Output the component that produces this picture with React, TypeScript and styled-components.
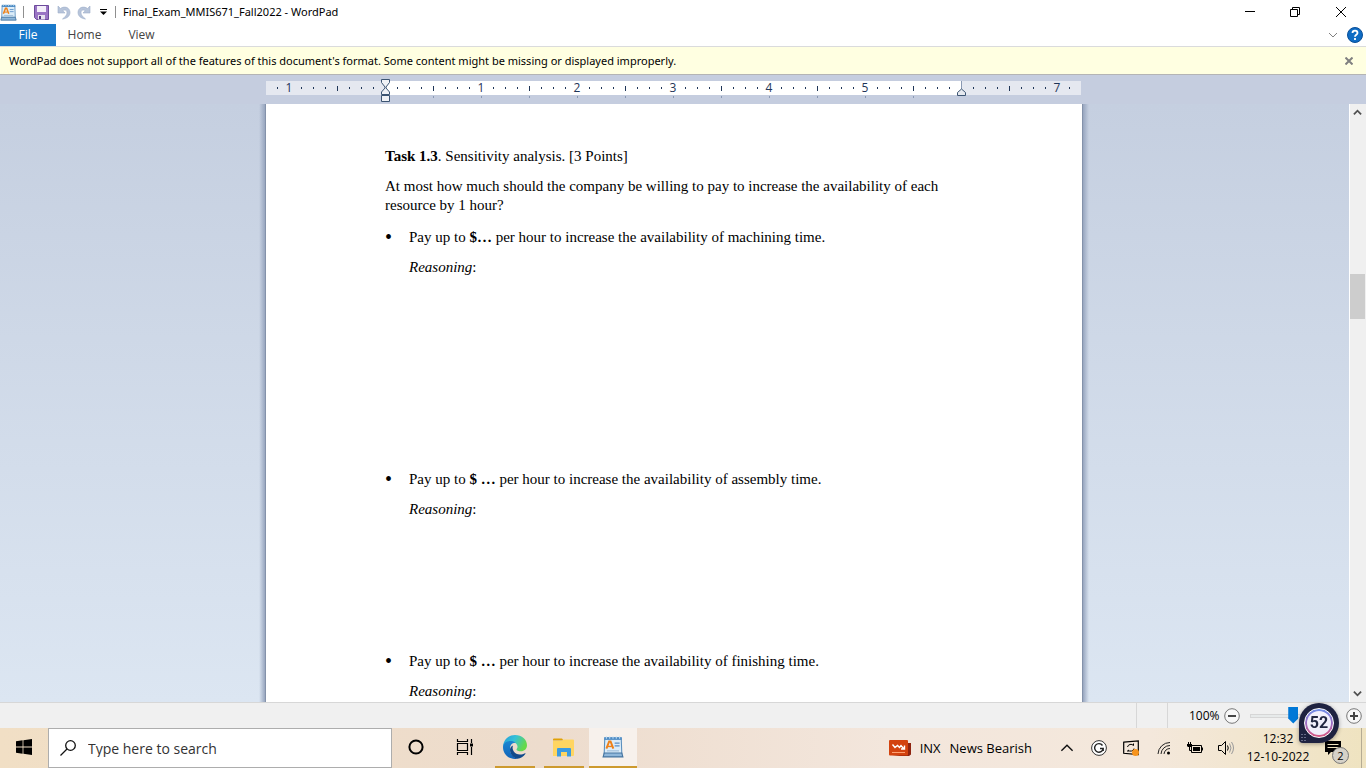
import React from 'react';
import styled, { createGlobalStyle } from 'styled-components';

const Global = createGlobalStyle`
  *, *::before, *::after { box-sizing: border-box; }
  body { margin: 0; font-family: "Open Sans", "Noto Sans", sans-serif; font-size: 12px; line-height: 16px; color: #000; }
  button { border: 0; padding: 0; background: none; font: inherit; color: inherit; display: inline-flex; align-items: center; justify-content: center; }
  svg { display: block; flex: none; }
`;

const Desktop = styled.div`
  height: 100vh;
  min-height: 480px;
  display: flex;
  flex-direction: column;
  overflow: hidden;
  background: #fff;
`;

const TitleBar = styled.header`
  display: flex;
  align-items: center;
  height: 24px;
  padding-right: 1px;
`;

const QuickAccess = styled.div`
  display: flex;
  align-items: center;
`;

const IconButton = styled.button<{ $w: number; $h?: number }>`
  width: ${p => p.$w}px;
  height: ${p => p.$h ?? 24}px;
  flex: none;
`;

const Separator = styled.span`
  width: 1px;
  height: 12px;
  margin-left: 6px;
  background: #8f8f8f;
`;

const WindowTitle = styled.h1`
  margin: 0 auto 0 7px;
  font-family: "Noto Sans", sans-serif;
  font-size: 11px;
  font-weight: 400;
  line-height: 24px;
  white-space: nowrap;
`;

const Tabs = styled.nav`
  display: flex;
  align-items: center;
  height: 23px;
  border-bottom: 1px solid #dadbdc;
  padding-right: 3px;
`;

const Tab = styled.button<{ $active?: boolean }>`
  height: 22px;
  width: ${p => (p.$active ? 56 : 57)}px;
  background: ${p => (p.$active ? '#1979ca' : 'transparent')};
  color: ${p => (p.$active ? '#fff' : '#444')};
`;

const Spacer = styled.span`
  flex: 1;
`;

const Notice = styled.div`
  display: flex;
  align-items: center;
  justify-content: space-between;
  height: 28px;
  padding: 0 9px;
  background: #ffffe1;
  border-bottom: 1px solid #b4b4b4;
  font-family: "Noto Sans", sans-serif;
  font-size: 11px;
  white-space: nowrap;
`;

const RulerBar = styled.div`
  flex: none;
  height: 29px;
  padding: 6px 18px 0 0;
  background: #c5cddf;
  display: flex;
  justify-content: center;
`;

const Ruler = styled.div`
  position: relative;
  width: 816px;
`;

const RulerScale = styled.div`
  display: flex;
  height: 14px;
  margin-right: 1px;
  padding-left: 5px;
  background: linear-gradient(to right, #e5e8f0 119px, #fff 119px, #fff 695px, #e5e8f0 695px);
`;

const StopScale = styled.div`
  display: flex;
  padding: 1px 0 0 5px;
`;

const Mark = styled.span<{ $h: number; $c?: string }>`
  flex: none;
  display: flex;
  align-items: center;
  justify-content: center;
  width: 12px;
  color: #1f3557;
  line-height: 14px;
  &::before {
    content: '';
    width: ${p => (p.$h ? 1 : 0)}px;
    height: ${p => p.$h}px;
    background: ${p => p.$c ?? '#1f3557'};
  }
`;

const IndentMarker = styled.div<{ $at: number; $top: number }>`
  position: absolute;
  left: ${p => p.$at}px;
  top: ${p => p.$top}px;
`;

const Workspace = styled.main`
  flex: 1;
  min-height: 0;
  display: flex;
  background: linear-gradient(#c5cfe0, #dce6f2);
`;

const Canvas = styled.div`
  flex: 1;
  display: flex;
  justify-content: center;
  overflow: hidden;
  padding-right: 1px;
`;

const PageEdge = styled.div<{ $side: 'left' | 'right' }>`
  width: 6px;
  background: linear-gradient(to ${p => p.$side}, #98a6bf, rgba(160, 175, 200, 0));
`;

const Page = styled.article`
  width: 818px;
  padding: 43px 120px 0 119px;
  background: #fff;
  border: solid #8492aa;
  border-width: 0 1px;
  font-family: "Liberation Serif", "Times New Roman", serif;
  font-size: 15px;
  line-height: 19px;
`;

const Paragraph = styled.p`
  margin: 0 0 11px;
`;

const Questions = styled.ul`
  margin: 13px 0 0;
  padding: 0;
  list-style: none;
`;

const Question = styled.li<{ $space: number }>`
  display: grid;
  grid-template-columns: 24px 1fr;
  min-height: ${p => p.$space}px;
  &::before {
    content: '•';
    font-size: 20px;
  }
`;

const ScrollBar = styled.div`
  width: 17px;
  display: flex;
  flex-direction: column;
  background: #f0f0f0;
  border-left: 1px solid #fff;
`;

const ScrollTrack = styled.div`
  flex: 1;
  width: 15px;
  padding-top: 153px;
`;

const ScrollThumb = styled.div`
  height: 45px;
  background: #cdcdcd;
`;

const StatusBar = styled.footer`
  flex: none;
  display: flex;
  align-items: center;
  justify-content: flex-end;
  height: 26px;
  background: #f0f0f0;
  border-top: 1px solid #d7d7d7;
  padding-right: 4px;
`;

const StatusPane = styled.span<{ $w: number }>`
  align-self: stretch;
  width: ${p => p.$w}px;
  border-left: 1px solid #d7d7d7;
`;

const ZoomLabel = styled.label`
  width: 35px;
`;

const ZoomSlider = styled.input`
  appearance: none;
  width: 88px;
  height: 18px;
  margin: 0 8px 0 10px;
  background: transparent;
  &::-webkit-slider-runnable-track {
    height: 4px;
    background: #e7eaea;
    border: 1px solid #d6d6d6;
  }
  &::-webkit-slider-thumb {
    appearance: none;
    width: 10px;
    height: 17px;
    margin-top: -8px;
    background: #0078d7;
    clip-path: polygon(0 0, 100% 0, 100% 70%, 50% 100%, 0 70%);
  }
`;

const TaskBar = styled.footer`
  flex: none;
  display: flex;
  align-items: center;
  height: 40px;
  font-size: 14px;
  background: linear-gradient(to right, #f1dfc5, #eddccd 40%, #f3e6dc 65%, #f4e8dc 84%, #efe3c0);
`;

const SearchBox = styled.label`
  display: flex;
  align-items: center;
  width: 344px;
  height: 40px;
  padding-left: 11px;
  gap: 12px;
  background: #fff;
  border: 1px solid #adadad;
`;

const SearchInput = styled.input`
  flex: 1;
  min-width: 0;
  border: 0;
  outline: 0;
  padding: 2px 0 0;
  background: transparent;
  font: inherit;
  &::placeholder { color: #333; opacity: 1; }
`;

const TaskButton = styled.button<{ $w?: number; $open?: boolean; $active?: boolean }>`
  width: ${p => p.$w ?? 48}px;
  height: 40px;
  flex: none;
  background: ${p => (p.$active ? '#f7f1ec' : 'transparent')};
  border-bottom: 2px solid ${p => (p.$open ? '#cd9a2e' : 'transparent')};
`;

const RunningApps = styled.div`
  display: flex;
  gap: 9px;
  margin: 0 5px 0 7px;
`;

const News = styled.button`
  gap: 9px;
  margin-right: 15px;
  font-size: 13px;
  white-space: nowrap;
`;

const Tray = styled.div`
  display: flex;
  align-items: center;
`;

const Clock = styled.time`
  width: 78px;
  font-size: 12px;
  line-height: 18px;
  text-align: center;
  white-space: nowrap;
`;

const Notifications = styled.div`
  position: relative;
  width: 45px;
  height: 40px;
  display: flex;
  align-items: center;
  padding-left: 8px;
  margin-right: 4px;
  border-right: 1px solid #b5ac94;
`;

const NotificationCount = styled.span`
  position: absolute;
  left: 15px;
  top: 19px;
  width: 17px;
  height: 17px;
  border-radius: 50%;
  border: 1px solid #777;
  background: #d6d2c8;
  font-size: 11px;
  line-height: 15px;
  text-align: center;
`;

const CounterBadge = styled.div`
  position: fixed;
  right: 27px;
  bottom: 25px;
  width: 40px;
  height: 40px;
  padding: 5px;
  background: #1e2240;
  border-radius: 50% 50% 50% 4px;
  box-shadow: 0 1px 4px rgba(0, 0, 0, 0.35);
`;

const CounterRing = styled.div`
  width: 30px;
  height: 30px;
  padding: 2px;
  border-radius: 50%;
  border: 1px solid #fff;
  background: linear-gradient(#6f8fe8, #a06cc0 55%, #d8567f);
`;

const CounterValue = styled.div`
  height: 24px;
  border-radius: 50%;
  background: #f1effb;
  color: #222741;
  font: 700 16px/24px Roboto, sans-serif;
  text-align: center;
`;

const Grip = styled.span`
  position: absolute;
  left: 2px;
  bottom: 2px;
`;

const DocIcon = ({ size }: { size: number }) => (
  <svg width={size} height={size} viewBox="0 0 20 20">
    <path d="M2.500 2.500h15l.5 13.500H2z" fill="#dcedf9" stroke="#5b8fbd" />
    <path d="M2 1h16v2.500H2z" fill="#4f8cc4" />
    <path d="M4 .5v2M7 .5v2M10 .5v2M13 .5v2M16 .5v2" stroke="#b8d9f2" />
    <path d="M2 15.500h16l1 3.500H1z" fill="#8fb7da" stroke="#45749f" />
    <path d="M4 11.500 6.500 5h1.300l2.500 6.500" fill="none" stroke="#ef8118" strokeWidth="1.800" />
    <path d="M5 9.500h4" stroke="#ef8118" strokeWidth="1.300" />
    <path d="M11.500 6.500h4.500M11.500 9h4.500" stroke="#5a8fc6" />
    <path d="M4.500 13.500h11" stroke="#9bbbd8" />
  </svg>
);

const SaveIcon = () => (
  <svg width="15" height="15" viewBox="0 0 15 15">
    <path d="M.5.5h14v14H2.500l-2-2z" fill="#9a74c4" stroke="#6c4a9b" />
    <path d="M3 1h9v6H3z" fill="#f4eefa" />
    <path d="M4 10h7v4.500H4z" fill="#e7e2ee" />
    <path d="M5 11h2v3H5z" fill="#553886" />
  </svg>
);

const UndoIcon = ({ flip }: { flip?: boolean }) => (
  <svg width="14" height="15" viewBox="0 0 14 15" transform={flip ? 'scale(-1 1)' : undefined}>
    <path d="M1 1v7h7L5.800 5.700C8 4.200 10.200 5.300 10 8c-.1 2.200-2 4-4.500 6C10 13.500 13 11 13 7.500 13 2.500 7.500.5 3.500 3.500z" fill="#b7c4da" stroke="#9fb0cb" strokeWidth=".6" />
  </svg>
);

const Hourglass = () => (
  <svg width="9" height="23" viewBox="0 0 9 23">
    <path d="M.5.5h8v3L5 8v1l3.500 4v2.500h-8V13L4 9V8L.5 3.500z" fill="#f0f2f6" stroke="#3c5573" />
    <path d="M.5 16.500h8v6h-8z" fill="#f0f2f6" stroke="#3c5573" />
  </svg>
);

const RightIndent = () => (
  <svg width="9" height="15" viewBox="0 0 9 15">
    <path d="M4.500 0v8" stroke="#8a99b3" />
    <path d="M4.500 8l4 3.500v3h-8v-3z" fill="#e6e9ef" stroke="#3c5573" />
  </svg>
);

const Chevron = ({ up, size = 9, color = '#505050', weight = 2 }: { up?: boolean; size?: number; color?: string; weight?: number }) => (
  <svg width={size} height={size} viewBox="0 0 10 10">
    <path d={up ? 'M1 7l4-4 4 4' : 'M1 3l4 4 4-4'} fill="none" stroke={color} strokeWidth={weight} />
  </svg>
);

const ZoomGlyph = ({ plus }: { plus?: boolean }) => (
  <svg width="16" height="16" viewBox="0 0 16 16">
    <circle cx="8" cy="8" r="7.300" fill="#f7f7f7" stroke="#777" />
    <path d={plus ? 'M4 8h8M8 4v8' : 'M4 8h8'} stroke="#444" strokeWidth="2" />
  </svg>
);

const WindowsLogo = () => (
  <svg width="16" height="16" viewBox="0 0 16 16">
    <path d="M0 2.200 6.600 1.300v6.300H0zM7.400 1.200 16 0v7.600H7.400zM0 8.400h6.600v6.300L0 13.800zM7.400 8.400H16V16l-8.600-1.200z" />
  </svg>
);

const EdgeLogo = () => (
  <svg width="24" height="24" viewBox="0 0 24 24">
    <defs>
      <linearGradient id="edgeTop" x1="0" y1="0" x2="1" y2=".4">
        <stop offset="0" stopColor="#239bd8" />
        <stop offset=".5" stopColor="#36c1d8" />
        <stop offset="1" stopColor="#66d94a" />
      </linearGradient>
      <linearGradient id="edgeLeft" x1="0" y1="0" x2="0" y2="1">
        <stop offset="0" stopColor="#1b86d2" />
        <stop offset="1" stopColor="#1063b8" />
      </linearGradient>
    </defs>
    <path d="M0 11.500C.5 4.800 5.500 0 12 0c7 0 12 4.600 12 10.300 0 3.700-2.800 6-6 6-2.500 0-4.500-.8-4.500-1.800 0-.7 1-1.100 1-2.800 0-2.800-2.700-4.700-6-4.700-4 0-7.300 2-8.500 4.500z" fill="url(#edgeTop)" />
    <path d="M0 12c0-3.500 3.500-6 7.500-6 2 0 4 .6 5.200 1.800C9 7.500 7 10.500 7 14c0 4.500 3 8.500 7.500 9.700C7 25.300 0 20 0 12z" fill="url(#edgeLeft)" />
    <path d="M10 10.500c-1.600 4 1.500 9 7 9 2 0 3.500-.5 5-1.300.4-.2.8.1.500.5-2 3-5 4.800-8 5C9.500 23 7 18.500 7 14.800c0-2 1-3.500 3-4.300z" fill="#114a8b" />
  </svg>
);

const FolderIcon = () => (
  <svg width="22" height="19" viewBox="0 0 22 19">
    <path d="M0 1.500Q0 .5 1 .5h8l1.500 2H0z" fill="#e0a106" />
    <path d="M0 3h9l1.500-1.500H20q1 0 1 1V17q0 1-1 1H0z" fill="#ffd561" />
    <path d="M4 18.500V11q0-1 1-1h12q1 0 1 1v7.500h-4V14H8v4.500z" fill="#3c9be0" />
  </svg>
);

const NewsIcon = () => (
  <svg width="22" height="16" viewBox="0 0 22 16">
    <path d="M18 3h4v11.500L20 16H3l15-2z" fill="#8e2410" />
    <rect width="19" height="15.500" rx="1" fill="#d3430f" />
    <path d="M3.500 4.500 6 7.500l2.500-2 2 2L12 5.500l3 3.500M15.500 5.500V9H12" fill="none" stroke="#fff" strokeWidth="1.400" />
    <path d="M3 12.500h13" stroke="#ffa071" />
  </svg>
);

const cells = Array.from({ length: 67 }, (_, i) => i - 9);

const questions = [
  { lead: '$…', resource: 'machining', space: 242 },
  { lead: '$ …', resource: 'assembly', space: 182 },
  { lead: '$ …', resource: 'finishing', space: 60 },
];

export default function App() {
  return (
    <Desktop>
      <Global />
      <TitleBar>
        <QuickAccess>
          <IconButton $w={17} aria-label="WordPad"><DocIcon size={17} /></IconButton>
          <Separator />
          <IconButton $w={34} aria-label="Save"><SaveIcon /></IconButton>
          <IconButton $w={12} aria-label="Undo"><UndoIcon /></IconButton>
          <IconButton $w={28} aria-label="Redo"><UndoIcon flip /></IconButton>
          <IconButton $w={11} aria-label="Customize Quick Access Toolbar">
            <svg width="7" height="6" viewBox="0 0 7 6"><path d="M0 .5h7" stroke="#000" /><path d="M0 2.500h7L3.500 6z" /></svg>
          </IconButton>
          <Separator />
        </QuickAccess>
        <WindowTitle>Final_Exam_MMIS671_Fall2022 - WordPad</WindowTitle>
        <IconButton $w={46} aria-label="Minimize">
          <svg width="10" height="10" viewBox="0 0 10 10"><path d="M0 4.500h10" stroke="#000" /></svg>
        </IconButton>
        <IconButton $w={44} aria-label="Restore">
          <svg width="10" height="10" viewBox="0 0 10 10"><path d="M.5 2.500h7v7h-7zM2.500 2.500v-2h7v7h-2" fill="none" stroke="#000" /></svg>
        </IconButton>
        <IconButton $w={48} aria-label="Close">
          <svg width="10" height="10" viewBox="0 0 10 10"><path d="M0 0l10 10M10 0L0 10" stroke="#000" /></svg>
        </IconButton>
      </TitleBar>
      <Tabs>
        <Tab $active>File</Tab>
        <Tab>Home</Tab>
        <Tab>View</Tab>
        <Spacer />
        <IconButton $w={28} $h={22} aria-label="Expand ribbon"><Chevron color="#808080" weight={1} size={10} /></IconButton>
        <IconButton $w={16} $h={22} aria-label="Help">
          <svg width="16" height="16" viewBox="0 0 16 16">
            <circle cx="8" cy="8" r="7.500" fill="#0f6cc4" stroke="#0a4f98" />
            <path d="M5.500 6c0-3.200 5-3.200 5 0 0 1.800-2.500 1.800-2.500 3.800M8 11v2" fill="none" stroke="#fff" strokeWidth="1.800" />
          </svg>
        </IconButton>
      </Tabs>
      <Notice role="status">
        <span>WordPad does not support all of the features of this document's format. Some content might be missing or displayed improperly.</span>
        <IconButton $w={16} aria-label="Dismiss">
          <svg width="8" height="8" viewBox="0 0 8 8"><path d="M.5.5l7 7M7.500.5l-7 7" stroke="#808080" strokeWidth="2" /></svg>
        </IconButton>
      </Notice>
      <RulerBar>
        <Ruler>
          <RulerScale>
            {cells.map(i => {
              const inch = i % 8 === 0 && i !== 0 && i !== 48;
              const blank = i === 0 || i === 48;
              return (
                <Mark key={i} $h={inch || blank ? 0 : i % 4 === 0 ? 5 : 2}>
                  {inch ? Math.abs(i / 8) : null}
                </Mark>
              );
            })}
          </RulerScale>
          <StopScale>
            {cells.map(i => <Mark key={i} $h={i > 0 && i < 48 && i % 4 === 0 ? 2 : 0} $c="#8a99b3" />)}
          </StopScale>
          <IndentMarker $at={115} $top={-2}><Hourglass /></IndentMarker>
          <IndentMarker $at={691} $top={0}><RightIndent /></IndentMarker>
        </Ruler>
      </RulerBar>
      <Workspace>
        <Canvas>
          <PageEdge $side="left" />
          <Page>
            <Paragraph><b>Task 1.3</b>. Sensitivity analysis. [3 Points]</Paragraph>
            <Paragraph>At most how much should the company be willing to pay to increase the availability of each resource by 1 hour?</Paragraph>
            <Questions>
              {questions.map(q => (
                <Question key={q.resource} $space={q.space}>
                  <div>
                    <Paragraph>Pay up to <b>{q.lead}</b> per hour to increase the availability of {q.resource} time.</Paragraph>
                    <Paragraph><i>Reasoning</i>:</Paragraph>
                  </div>
                </Question>
              ))}
            </Questions>
          </Page>
          <PageEdge $side="right" />
        </Canvas>
        <ScrollBar>
          <IconButton $w={15} $h={17} aria-label="Scroll up"><Chevron up /></IconButton>
          <ScrollTrack><ScrollThumb /></ScrollTrack>
          <IconButton $w={15} $h={17} aria-label="Scroll down"><Chevron /></IconButton>
        </ScrollBar>
      </Workspace>
      <StatusBar>
        <StatusPane $w={31} />
        <StatusPane $w={22} />
        <ZoomLabel htmlFor="zoom">100%</ZoomLabel>
        <IconButton $w={16} aria-label="Zoom out"><ZoomGlyph /></IconButton>
        <ZoomSlider id="zoom" type="range" min={0} max={100} defaultValue={49} />
        <IconButton $w={16} aria-label="Zoom in"><ZoomGlyph plus /></IconButton>
      </StatusBar>
      <TaskBar>
        <TaskButton aria-label="Start"><WindowsLogo /></TaskButton>
        <SearchBox>
          <svg width="16" height="16" viewBox="0 0 16 16"><circle cx="10.500" cy="5.500" r="4.800" fill="none" stroke="#111" strokeWidth="1.300" /><path d="M7 9l-6.500 6.500" stroke="#111" strokeWidth="1.300" /></svg>
          <SearchInput type="text" aria-label="Search" placeholder="Type here to search" />
        </SearchBox>
        <TaskButton aria-label="Cortana">
          <svg width="16" height="16" viewBox="0 0 16 16"><circle cx="8" cy="8" r="6.600" fill="none" stroke="#000" strokeWidth="2" /></svg>
        </TaskButton>
        <TaskButton aria-label="Task View">
          <svg width="17" height="16" viewBox="0 0 17 16">
            <path d="M1.500 4.500h10v7h-10zM1.500 0v2.500h10V0M1.500 16v-2.500h10V16M15.500 0v4M15.500 8v8" fill="none" stroke="#000" strokeWidth="1.200" />
            <path d="M14 4.500h3v3h-3z" />
          </svg>
        </TaskButton>
        <RunningApps>
          <TaskButton $w={40} $open aria-label="Microsoft Edge"><EdgeLogo /></TaskButton>
          <TaskButton $w={40} $open aria-label="File Explorer"><FolderIcon /></TaskButton>
        </RunningApps>
        <TaskButton $open $active aria-label="WordPad"><DocIcon size={22} /></TaskButton>
        <Spacer />
        <News><NewsIcon /><span>INX</span><span>News Bearish</span></News>
        <Tray>
          <IconButton $w={40} aria-label="Show hidden icons"><Chevron up size={14} color="#111" weight={1} /></IconButton>
          <IconButton $w={24} aria-label="Grammarly">
            <svg width="16" height="16" viewBox="0 0 16 16"><circle cx="8" cy="8" r="7.400" fill="#fff" stroke="#333" /><path d="M11.500 5.500A4.300 4.300 0 1 0 12.200 8.500H9M12.200 8.500V11" fill="none" stroke="#222" strokeWidth="1.400" /></svg>
          </IconButton>
          <IconButton $w={40} aria-label="Updates">
            <svg width="17" height="16" viewBox="0 0 17 16"><path d="M.7 2.200 15.300 1v13.500L.7 13.300z" fill="none" stroke="#000" strokeWidth="1.200" /><path d="M4.500 7a3.500 3.500 0 0 1 6-1.500V3.500M11 8.500a3.500 3.500 0 0 1-6 1.500v2" fill="none" stroke="#000" /><circle cx="12.500" cy="12.500" r="3.500" fill="#f7941d" /></svg>
          </IconButton>
          <IconButton $w={26} aria-label="Network">
            <svg width="14" height="14" viewBox="0 0 14 14"><path d="M1 13A12 12 0 0 1 13 1.500M4 13A9 9 0 0 1 13 4.500M7 13a6 6 0 0 1 6-5.500" fill="none" stroke="#222" /><circle cx="11.500" cy="12" r="1.500" /></svg>
          </IconButton>
          <IconButton $w={36} aria-label="Battery">
            <svg width="16" height="12" viewBox="0 0 16 12"><path d="M4.500 3.500h10v7h-10z" fill="none" stroke="#000" /><path d="M6 5h7v4H6zM15 5.500h1v3h-1zM0 2h5v2L4 5H1L0 4z" /><path d="M1.500 0v2M3.500 0v2M2.500 5v3.500h2" fill="none" stroke="#000" /></svg>
          </IconButton>
          <IconButton $w={26} aria-label="Volume">
            <svg width="17" height="14" viewBox="0 0 17 14"><path d="M.5 4.500h3l4-4v13l-4-4h-3z" fill="none" stroke="#000" /><path d="M9.500 4.500q1.500 2.500 0 5" fill="none" stroke="#000" /><path d="M11.500 2.500q3 4.500 0 9M13.500 1q4 6 0 12" fill="none" stroke="#999" /></svg>
          </IconButton>
        </Tray>
        <Clock>12:32<br />12-10-2022</Clock>
        <Notifications>
          <svg width="16" height="14" viewBox="0 0 16 14"><path d="M0 0h16v11H6l-3 3v-3H0z" /><path d="M2.500 3.500h11M2.500 6.500h11" stroke="#efe3c0" /></svg>
          <NotificationCount>2</NotificationCount>
        </Notifications>
      </TaskBar>
      <CounterBadge>
        <CounterRing><CounterValue>52</CounterValue></CounterRing>
        <Grip>
          <svg width="5" height="7" viewBox="0 0 5 7"><path d="M1 0v7M4 0v7" stroke="#aeb2cc" strokeWidth="1" strokeDasharray="1 2" /></svg>
        </Grip>
      </CounterBadge>
    </Desktop>
  );
}
